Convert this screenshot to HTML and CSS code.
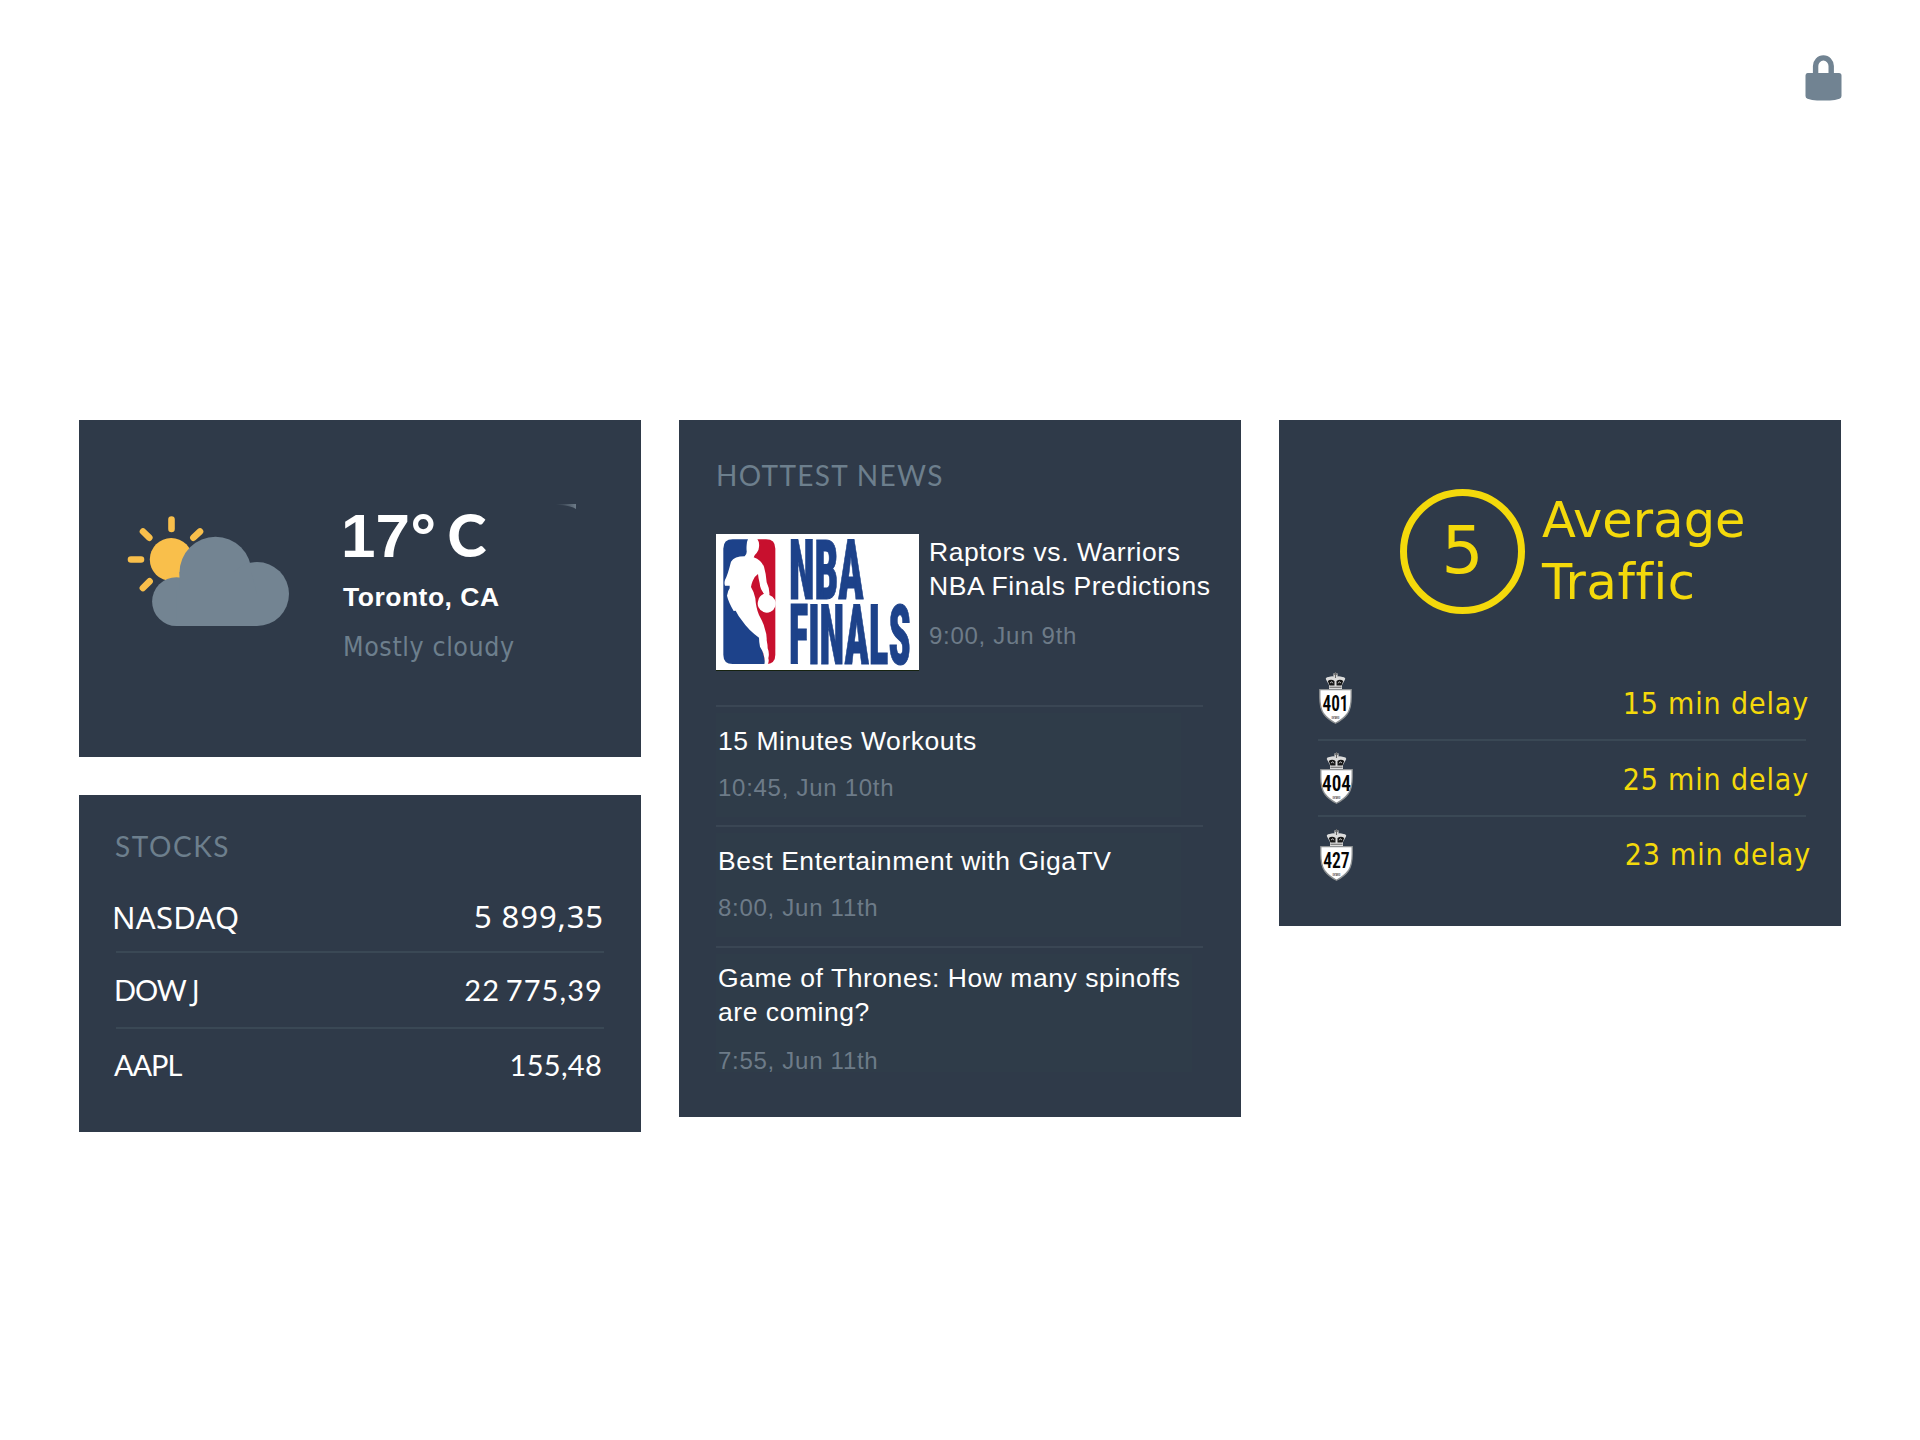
FILE: index.html
```
<!DOCTYPE html>
<html lang="en">
<head>
<meta charset="utf-8">
<title>Home dashboard</title>
<link rel="stylesheet" href="styles.css">
</head>
<body>
<header class="topbar">
  <svg class="lock" viewBox="0 0 37 47" aria-label="Locked">
    <path d="M10.6 21V12a7.700 8 0 0 1 15.600 0V21" fill="none" stroke="#718392" stroke-width="5.400"/>
    <path d="M2.500 19H34q2.500 0 2.500 2.500V42q0 2-2 2.700Q30 46.500 25 46.500H12Q7 46.500 2.500 44.700 .5 44 .5 42V21.500Q.5 19 2.500 19Z" fill="#718392"/>
  </svg>
</header>
<main class="board">
  <div class="column">
    <section class="card weather">
      <svg class="weather-icon" viewBox="127 515 163 112">
        <g stroke="#f9bf4b" stroke-width="6.600" stroke-linecap="round">
          <path d="M171.500 519.500V529M143 531.500l6.300 6.200M200 531.500l-6.600 6.200M131 559.500h10M149.600 581.300l-6.700 6.700"/>
        </g>
        <circle cx="171.200" cy="559.500" r="21.400" fill="#f9bf4b"/>
        <g fill="#738492">
          <circle cx="215.500" cy="572.700" r="36"/>
          <circle cx="176.500" cy="601.600" r="24.400"/>
          <circle cx="257" cy="594" r="32"/>
          <path d="M179.500 572H251L257 594V626H176.500V590H179.500Z"/>
        </g>
      </svg>
      <div class="weather-text">
        <p class="temp">17<span class="degree">°</span><span class="unit">C</span></p>
        <p class="place">Toronto, CA</p>
        <p class="sky">Mostly cloudy</p>
      </div>
      <svg class="glint" viewBox="0 0 20 6">
        <defs><linearGradient id="fade"><stop offset="0" stop-color="#5d6b78" stop-opacity="0"/><stop offset="1" stop-color="#6d7b88"/></linearGradient></defs>
        <path d="M0 0H20V5Q16 1.500 0 .8Z" fill="url(#fade)"/>
      </svg>
    </section>
    <section class="card stocks">
      <h2 class="title">STOCKS</h2>
      <ul class="list">
        <li class="stock lead-stock"><span>NASDAQ</span><span class="quote">5 899,35</span></li>
        <li class="stock"><span class="ticker">DOW <span class="drop">J</span></span><span class="quote thin-gap">22 775,39</span></li>
        <li class="stock last"><span class="ticker">AAPL</span><span class="quote tight">155,48</span></li>
      </ul>
    </section>
  </div>
  <section class="card news">
    <h2 class="title">HOTTEST NEWS</h2>
    <article class="story feature">
      <svg class="nba" viewBox="33 27 609 408">
        <rect x="33" y="27" width="609" height="408" fill="#fff"/>
        <path d="M133 43H83Q55 43 55 71V389Q55 417 83 417H182V230Z" fill="#1d428a"/>
        <path d="M150 43H183Q211 43 211 71V389Q211 417 183 417H182L130 200Z" fill="#c8102e"/>
        <path d="M129 42H157Q164 52 162 66Q162 76 155 84Q148 90 146 97Q168 105 177 125Q183 145 185 172Q195 194 193 210A27 27 0 1 1 160 226Q162 212 177 206Q165 192 164 175Q160 160 159 147Q147 155 143 168Q139 178 138 186Q147 200 151 220Q153 250 162 270Q176 295 179 310Q186 330 185 345Q188 360 188 370Q194 384 190 400Q193 410 188 418H178Q181 405 176 390Q174 378 165 365Q162 350 162 338Q130 315 112 288Q98 270 92 257L86 258Q70 230 66 212Q68 198 74 190V182H60Q57 175 60 165Q68 150 78 110Q88 94 119 94Q126 88 125 78Q124 70 125 60Q126 48 129 42Z" fill="#fff"/>
        <g class="nba-word">
          <text x="252" y="223" textLength="224" lengthAdjust="spacingAndGlyphs">NBA</text>
          <text x="252" y="416" textLength="365" lengthAdjust="spacingAndGlyphs">FINALS</text>
        </g>
      </svg>
      <div class="story-body">
        <h3 class="headline">Raptors vs. Warriors<br>NBA Finals Predictions</h3>
        <p class="date">9:00, Jun 9th</p>
      </div>
    </article>
    <article class="story brief">
      <h3 class="headline">15 Minutes Workouts</h3>
      <p class="date">10:45, Jun 10th</p>
    </article>
    <article class="story brief second">
      <h3 class="headline">Best Entertainment with GigaTV</h3>
      <p class="date">8:00, Jun 11th</p>
    </article>
    <article class="story brief third">
      <h3 class="headline">Game of Thrones: How many spinoffs<br>are coming?</h3>
      <p class="date">7:55, Jun 11th</p>
    </article>
  </section>
  <section class="card traffic">
    <svg class="defs" width="0" height="0">
      <symbol id="shield" viewBox="0 0 33 52">
        <path d="M10 17.500V13L7 7.500Q6 5.500 9.500 5Q13 4 14.500 4.500L14.300 1.500H18.700L18.500 4.500Q20 4 23.500 5Q27 5.500 26 7.500L23 13V17.500Z" fill="#dcdcdc"/>
        <path d="M8.800 9Q12 6.500 15.500 9V13.500H10.500ZM24.200 9Q21 6.500 17.500 9V13.500H22.500Z" fill="#161616"/>
        <path d="M16.500 0V6M14.500 2.300H18.500M10.500 15.300H22.500" stroke="#666" stroke-width="1.100" fill="none"/>
        <path d="M11 11l1.800-1.300 1 1.600M22 11l-1.800-1.300-1 1.600" stroke="#ddd" stroke-width=".8" fill="none"/>
        <path d="M.8 17.700H32.200V25Q32.200 36 28.500 41.500Q24.500 47 16.500 51.300Q8.500 47 4.500 41.500Q.8 36 .8 25Z" fill="#fff" stroke="#8d9092" stroke-width="1.300"/>
      </symbol>
    </svg>
    <div class="summary">
      <div class="level">5</div>
      <p class="verdict">Average<br><span class="loose">Traffic</span></p>
    </div>
    <ul class="list">
      <li class="route first">
        <svg class="shield" viewBox="0 0 33 52"><use href="#shield"/><text class="num" x="3.500" y="38.700" textLength="26" lengthAdjust="spacingAndGlyphs">401</text><text class="prov" x="12.500" y="46.500" textLength="8" lengthAdjust="spacingAndGlyphs">ONTARIO</text></svg>
        <span class="delay">15 min delay</span>
      </li>
      <li class="route">
        <svg class="shield" viewBox="0 0 33 52"><use href="#shield"/><text class="num" x="2" y="38.700" textLength="29" lengthAdjust="spacingAndGlyphs">404</text><text class="prov" x="12.500" y="46.500" textLength="8" lengthAdjust="spacingAndGlyphs">ONTARIO</text></svg>
        <span class="delay">25 min delay</span>
      </li>
      <li class="route last">
        <svg class="shield" viewBox="0 0 33 52"><use href="#shield"/><text class="num" x="3.200" y="38.700" textLength="26.500" lengthAdjust="spacingAndGlyphs">427</text><text class="prov" x="12.500" y="46.500" textLength="8" lengthAdjust="spacingAndGlyphs">ONTARIO</text></svg>
        <span class="delay">23 min delay</span>
      </li>
    </ul>
  </section>
</main>
</body>
</html>
```
FILE: styles.css
```
* { box-sizing: border-box; }
body { margin: 0; background: #fff; color: #fff; }
h2, h3, p, ul { margin: 0; padding: 0; font-weight: 400; list-style: none; white-space: nowrap; }
svg { display: block; flex: none; }

.topbar { height: 420px; padding: 54px 78px 0 0; display: flex; justify-content: flex-end; align-items: flex-start; }
.lock { width: 37px; height: 47px; }

.board { display: flex; align-items: flex-start; gap: 38px; padding-left: 79px; }
.column { display: flex; flex-direction: column; gap: 38px; }
.card { width: 562px; background: #2f3a49; }
.title { font: 28px/34px Lato, sans-serif; color: #6d7f8d; }

/* weather */
.weather { height: 337px; display: flex; align-items: flex-start; padding-left: 48px; position: relative; }
.weather-icon { width: 163px; height: 112px; margin-top: 95px; }
.weather-text { margin-left: 51px; padding-top: 82px; }
.temp { font: bold 62px/68px "Liberation Sans", sans-serif; }
.degree, .unit { font-family: Lato, sans-serif; font-weight: 900; font-size: 59px; line-height: 0; }
.degree { margin-left: 1px; font-weight: 700; }
.unit { margin-left: 12px; }
.place { font: bold 26.500px/30px "Liberation Sans", sans-serif; letter-spacing: .5px; margin: 12px 0 0 2px; }
.sky { font: 26.500px/30px "DejaVu Sans Condensed", "DejaVu Sans", sans-serif; letter-spacing: .6px; color: #6d7f8d; margin: 20px 0 0 2px; }
.glint { position: absolute; left: 477px; top: 84px; width: 20px; height: 6px; }

/* stocks */
.stocks { height: 337px; padding: 34px 37px 0; }
.stocks .title { letter-spacing: 1.550px; margin-left: -1px; }
.stock { display: flex; justify-content: space-between; align-items: flex-start; height: 76px; padding-top: 19px; border-bottom: 2px solid #3a4855; font: 29px/35px Lato, sans-serif; }
.stock .quote { letter-spacing: .8px; margin-right: 1px; }
.stock .quote.thin-gap { letter-spacing: 1.100px; word-spacing: -3px; }
.stock .quote.tight { letter-spacing: .3px; margin-right: 2px; }
.ticker { letter-spacing: -1.100px; margin-left: -2px; }
.drop { font-family: "Noto Sans", sans-serif; line-height: 0; }
.lead-stock { height: 90px; padding-top: 33px; font: 31px/42px "Noto Sans", sans-serif; }
.lead-stock span:first-child { margin-left: -4px; letter-spacing: .3px; }
.stock.lead-stock .quote { margin: -1px 0 0; letter-spacing: .9px; }
.stock.last { border: 0; padding-top: 18px; }

/* news */
.news { height: 697px; padding: 38px 38px 0 37px; }
.news .title { letter-spacing: 1.330px; margin-bottom: 42px; }
.story { border-bottom: 2px solid #3a4654; }
.headline { font: 26.500px/34px "Liberation Sans", sans-serif; letter-spacing: .55px; }
.date { font: 24px/27px "Liberation Sans", sans-serif; letter-spacing: .72px; color: #6d7b88; }
.feature { display: flex; align-items: flex-start; gap: 10px; height: 173px; }
.feature .headline { margin: 1px 0 19px; }
.nba { width: 203px; height: 136px; box-shadow: 0 1px 0 #16220f; }
.nba-word { font-family: Roboto, sans-serif; font-size: 250px; font-weight: 900; font-stretch: 75%; fill: #1d428a; stroke: #1d428a; stroke-width: 3px; }
.brief { height: 120px; padding: 17px 0 0 2px; background: linear-gradient(#2f3c49, #2f3c49) 0 6px / 465px 104px no-repeat; }
.brief .date { margin-top: 16px; }
.second { height: 121px; }
.third { border: 0; height: 140px; padding-top: 13px; background-size: 476px 118px; }
.third .date { margin-top: 18px; }

/* traffic */
.traffic { height: 506px; padding: 69px 35px 0 39px; color: #f4d90b; position: relative; }
.defs { position: absolute; }
.summary { display: flex; gap: 17px; margin-left: 82px; font-family: "DejaVu Sans", sans-serif; }
.level { width: 125px; height: 125px; border: 7px solid #f4d90b; border-radius: 50%; font-size: 66px; line-height: 110px; text-align: center; }
.verdict { font-size: 49.500px; line-height: 62px; letter-spacing: .05px; font-variant-ligatures: none; }
.loose { letter-spacing: .6px; }
.route { display: flex; justify-content: space-between; align-items: flex-start; height: 76px; padding: 11px 0 0 2px; border-bottom: 2px solid #3a4855; }
.shield { width: 33px; height: 52px; }
.delay { font: 30px/34px "DejaVu Sans Condensed", "DejaVu Sans", sans-serif; letter-spacing: .85px; margin: 11px -3px 0 0; }
.route.first { height: 127px; padding: 58px 0 0 1px; }
.route.first .delay { margin-top: 15px; }
.route.last { border: 0; padding-top: 12px; }
.route.last .delay { margin: 9px -5px 0 0; }
.num { font-family: Roboto, sans-serif; font-size: 22px; font-weight: 600; font-stretch: 75%; fill: #050505; }
.prov { font: bold 3px "Liberation Sans", sans-serif; fill: #333; }
```
